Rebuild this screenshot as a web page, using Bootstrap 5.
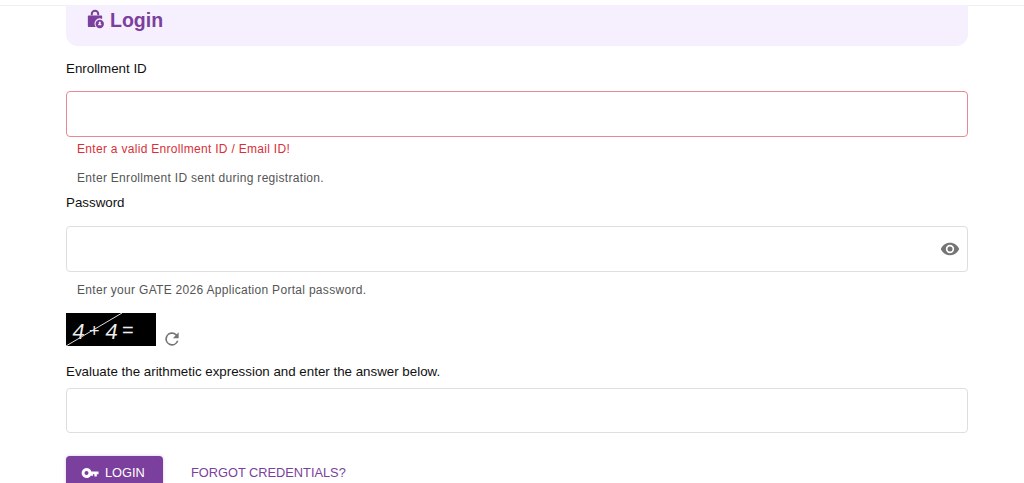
<!DOCTYPE html>
<html lang="en">
<head>
  <meta charset="UTF-8">
  <meta name="viewport" content="width=device-width, initial-scale=1.0">
  <title>Login</title>
  <link href="https://cdn.jsdelivr.net/npm/bootstrap@5.3.3/dist/css/bootstrap.min.css" rel="stylesheet">
  <style>
    html, body { height: 483px; overflow: hidden; }
    body { font-family: "Liberation Sans", Arial, sans-serif; font-size: 13.33px; color: #212121; background: #fff; }
    .top-line { height: 6px; border-bottom: 1px solid #efefef; }
    .login-wrap { width: 902px; margin-left: 66px; }
    .login-head { height: 41px; margin-top: -1px; padding: 1px 0 0 20px; background: #f6effd; border-radius: 0 0 12px 12px; color: #7b3f9d; font-size: 19.5px; font-weight: 700; line-height: 28px; }
    .field-label { height: 20px; line-height: 20px; margin: 0; color: #111; }
    .field-box { height: 46px; border: 1px solid #dedede; border-radius: 4px; }
    .field-box:focus { border-color: #dedede; box-shadow: none; }
    .field-box.bad-box, .field-box.bad-box:focus { border-color: #e58a92; }
    .field-box.short-box { height: 45px; }
    .hint-text { padding-left: 11px; font-size: 12px; letter-spacing: .3px; line-height: 18px; color: #555; }
    .hint-text.bad-text { color: #d92f3a; }
    .eye-btn { position: absolute; right: 8px; top: 13px; line-height: 0; }
    .captcha-box { width: 90px; height: 33px; background: #000; }
    .captcha-text { font-family: "Liberation Sans", Arial, sans-serif; font-size: 20px; fill: #eee; }
    .captcha-digit { font-size: 22px; }
    .captcha-plus { font-size: 18px; }
    .login-btn { width: 97px; height: 33px; padding: 0 0 0 15px; background: #7b3f9d; border: 0; border-radius: 4px 4px 0 0; color: #fff; font-size: 12.8px; box-shadow: 0 0 3px rgba(123,63,157,.3); }
    .login-btn:hover { background: #7b3f9d; color: #fff; }
    .forgot-link { color: #7b3f9d; font-size: 12.8px; text-decoration: none; }
  </style>
</head>
<body>
  <div class="top-line"></div>
  <div class="login-wrap">
    <div class="login-head d-flex align-items-start" style="gap:5px">
      <svg style="margin:3px 0 0 -1px" width="20" height="20" viewBox="0 0 19 19" fill="#7b3f9d" aria-hidden="true">
        <path d="M5.5 6V4.8a4 4 0 0 1 8 0V6h-1.9V4.8a2.1 2.1 0 0 0-4.2 0V6z"/>
        <path d="M3.5 6.2h12a.8.8 0 0 1 .8.8v2.4a5 5 0 0 0-6.1 7.6H3.5a.8.8 0 0 1-.8-.8V7a.8.8 0 0 1 .8-.8z"/>
        <path fill-rule="evenodd" d="M14 10.2a4 4 0 1 1 0 8 4 4 0 0 1 0-8zm0 1.6a1 1 0 0 0-.6 1.8l-.9.9v1h3v-1l-.9-.9a1 1 0 0 0-.6-1.8z"/>
      </svg>
      <span>Login</span>
    </div>

    <form onsubmit="event.preventDefault();">
      <label class="field-label d-block" style="margin-top:13px">Enrollment ID</label>
      <input class="form-control field-box bad-box" type="text" style="margin-top:12px">
      <div class="hint-text bad-text" style="padding-top:3px">Enter a valid Enrollment ID / Email ID!</div>
      <div class="hint-text" style="margin-top:11px">Enter Enrollment ID sent during registration.</div>

      <label class="field-label d-block" style="margin-top:6px">Password</label>
      <div class="position-relative" style="margin-top:13px">
        <input class="form-control field-box" type="password">
        <span class="eye-btn">
          <svg width="20" height="20" viewBox="0 0 24 24" fill="#757575" aria-hidden="true">
            <path d="M12 4.5C7 4.5 2.7 7.6 1 12c1.7 4.4 6 7.5 11 7.5s9.3-3.1 11-7.5c-1.7-4.4-6-7.5-11-7.5zM12 17a5 5 0 1 1 0-10 5 5 0 0 1 0 10zm0-8a3 3 0 1 0 0 6 3 3 0 0 0 0-6z"/>
          </svg>
        </span>
      </div>
      <div class="hint-text" style="margin-top:9px">Enter your GATE 2026 Application Portal password.</div>

      <div class="d-flex align-items-end" style="margin-top:14px">
        <svg class="captcha-box" viewBox="0 0 90 33" role="img" aria-label="captcha">
          <text class="captcha-text captcha-digit" x="10" y="26" transform="skewX(-10)">4</text>
          <text class="captcha-text captcha-plus" x="23" y="24">+</text>
          <text class="captcha-text captcha-digit" x="43" y="26" transform="skewX(-10)">4</text>
          <text class="captcha-text" x="56" y="24">=</text>
          <line x1="0" y1="33" x2="56" y2="0" stroke="#ddd" stroke-width="1"/>
        </svg>
        <svg width="20" height="20" viewBox="0 0 24 24" fill="#757575" style="margin:0 0 -3px 6px" aria-hidden="true">
          <path d="M17.65 6.35A8 8 0 1 0 19.73 14h-2.08A6 6 0 1 1 12 6c1.66 0 3.14.69 4.22 1.78L13 11h7V4z"/>
        </svg>
      </div>

      <label class="field-label d-block" style="margin-top:16px">Evaluate the arithmetic expression and enter the answer below.</label>
      <input class="form-control field-box short-box" type="text" style="margin-top:6px">

      <div class="d-flex align-items-start" style="margin-top:23px">
        <button class="btn login-btn d-flex align-items-center" style="gap:6px" type="submit">
          <svg width="18" height="10" viewBox="0 0 17 10" fill="#fff" aria-hidden="true">
            <path fill-rule="evenodd" d="M5 0a5 5 0 0 1 4.8 3.5H17v2.7h-1.7V8.5h-2.4V6.2h-1.4v1.6H9.3A5 5 0 1 1 5 0zm0 3a2 2 0 1 0 0 4 2 2 0 0 0 0-4z"/>
          </svg>
          <span>LOGIN</span>
        </button>
        <a class="forgot-link" href="#" style="margin:7px 0 0 28px">FORGOT CREDENTIALS?</a>
      </div>
    </form>
  </div>
</body>
</html>
